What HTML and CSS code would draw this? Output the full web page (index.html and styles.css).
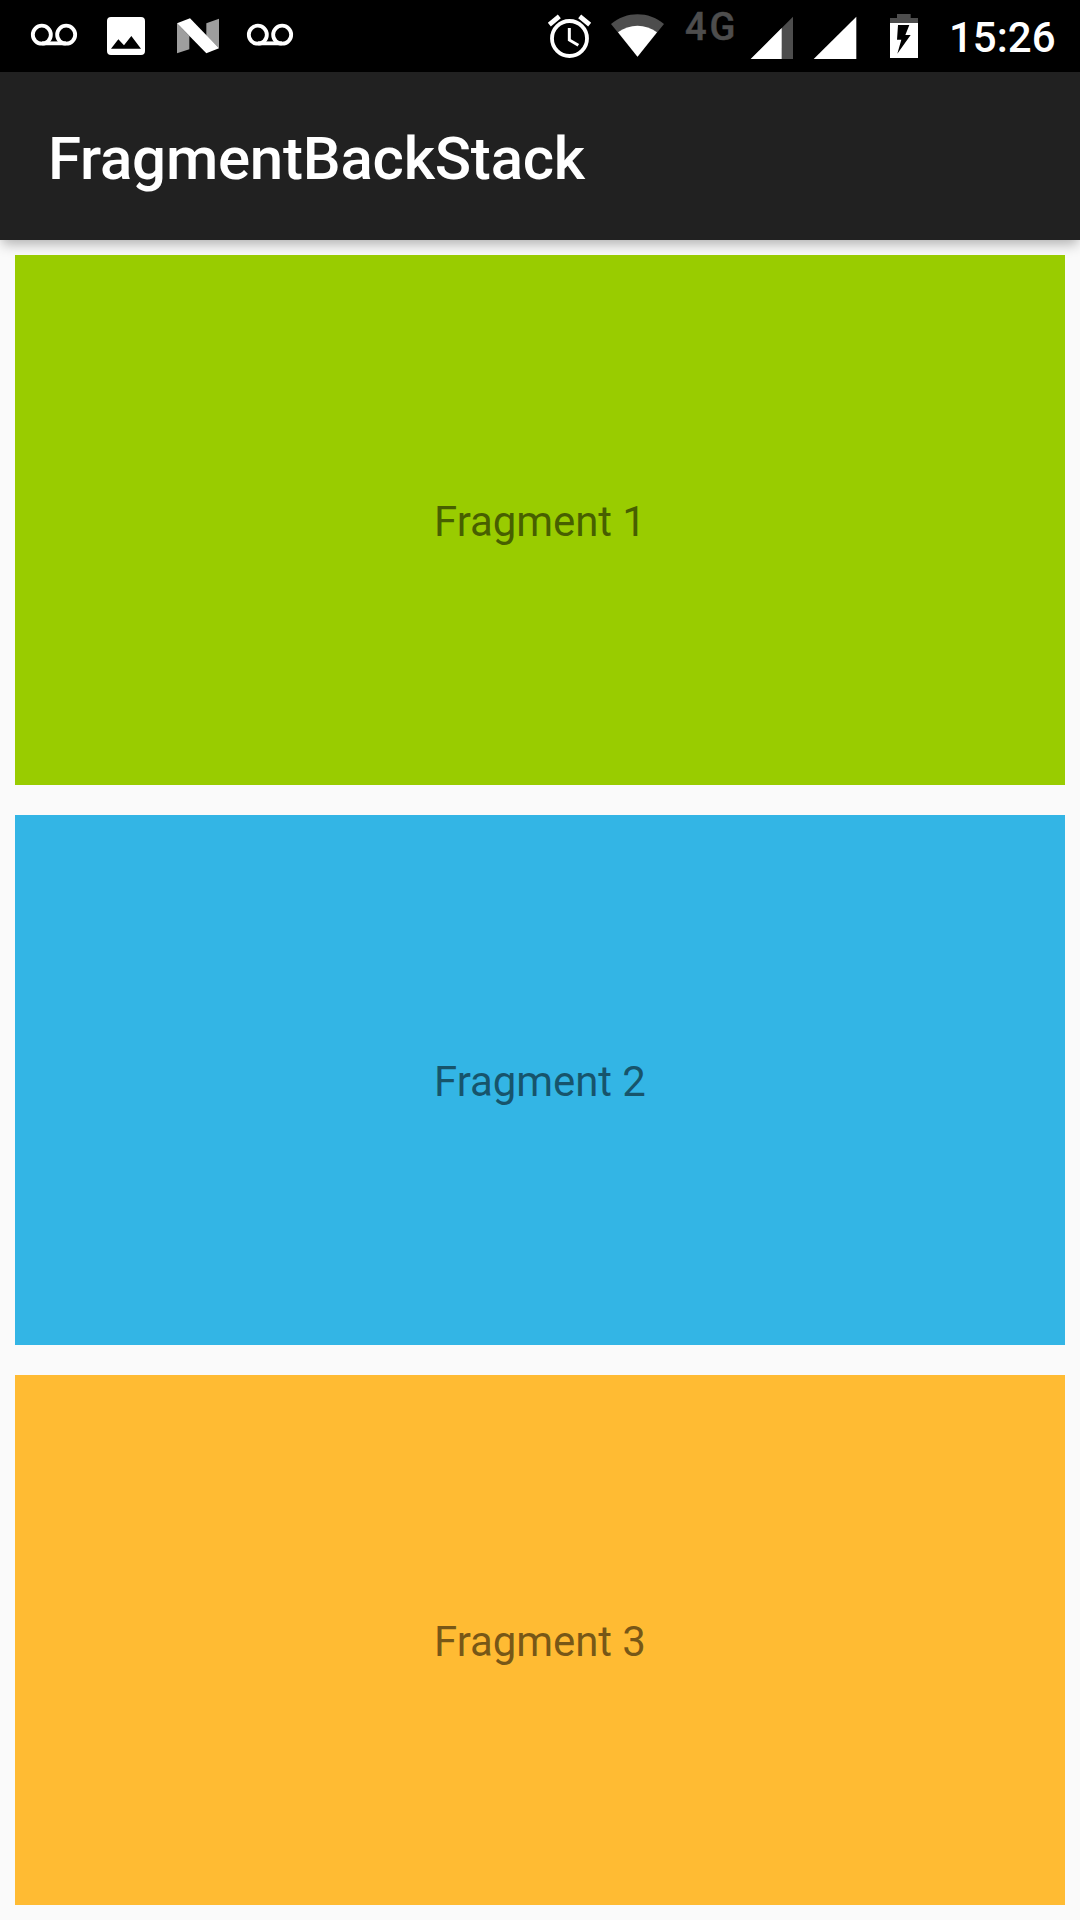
FILE: index.html
```html
<!DOCTYPE html>
<html lang="en">
<head>
<meta charset="utf-8">
<title>FragmentBackStack</title>
<link rel="stylesheet" href="styles.css">
</head>
<body>
<div class="screen">
  <header class="status-bar">
    <div class="notifications">
      <svg class="icon voicemail" viewBox="90 0 144 216"><g class="line"><circle cx="125.500" cy="104" r="27"/><circle cx="198.500" cy="104" r="27"/><path d="M125.500 130H198.500"/></g></svg>
      <svg class="icon photo" viewBox="318 0 120 216"><path fill-rule="evenodd" d="M333 51H423Q435 51 435 63V153Q435 165 423 165H333Q321 165 321 153V63Q321 51 333 51ZM333 146H423L394 108L372 136L355 118Z"/></svg>
      <svg class="icon nougat" viewBox="528 0 132 216"><path class="shade" d="M531 70L568 108V148L531 160ZM619 70L657 56V145L619 107Z"/><path d="M531 70L570 55L657 145L619 160Z"/></svg>
      <svg class="icon voicemail" viewBox="90 0 144 216"><g class="line"><circle cx="125.500" cy="104" r="27"/><circle cx="198.500" cy="104" r="27"/><path d="M125.500 130H198.500"/></g></svg>
    </div>
    <div class="system">
      <svg class="icon alarm" viewBox="51 0 135 216"><g class="line"><circle cx="118.500" cy="115.500" r="52.500"/><path class="bell" d="M58 74L88 49M149 49L179 74"/><path class="hand" d="M118 84V120L145 136"/></g></svg>
      <svg class="icon wifi" viewBox="240 0 165 216"><path class="dim" d="M243 72C289 33 356 33 402 72L322.500 170Z"/><path d="M264 97C298 71 347 71 381 97L322.500 170Z"/></svg>
      <span class="network">4G</span>
      <svg class="icon signal" viewBox="660 0 132 216"><path class="dim" d="M789 50V177H662Z"/><path d="M755 84V177H662Z"/></svg>
      <svg class="icon signal-full" viewBox="38 0 132 216"><path d="M168 50V177H40Z"/></svg>
      <svg class="icon battery" viewBox="267 0 90 216"><path class="dim" d="M270 54H291V42H332V54H354V70H270Z"/><path fill-rule="evenodd" d="M270 69H354V174H270ZM294 75H328L316 105H332L292 161L304 119H291Z"/></svg>
      <time class="clock">15:26</time>
    </div>
  </header>
  <div class="app-bar"><h1 class="title">FragmentBackStack</h1></div>
  <main class="fragments">
    <section class="fragment green">Fragment 1</section>
    <section class="fragment blue">Fragment 2</section>
    <section class="fragment orange">Fragment 3</section>
  </main>
</div>
</body>
</html>
```
FILE: styles.css
```css
* { box-sizing: border-box; }
body { margin: 0; font-family: Roboto, sans-serif; }
.screen { width: 1080px; height: 1920px; display: flex; flex-direction: column; background: #fafafa; overflow: hidden; }
.status-bar { height: 72px; flex: none; background: #000; color: #fff; display: flex; justify-content: space-between; }
.notifications, .system { display: flex; }
.notifications { padding-left: 30px; }
.system { padding-right: 24px; }
.icon { display: block; height: 72px; flex: none; fill: #fff; }
.line { fill: none; stroke: #fff; stroke-width: 11.500; }
.bell { stroke-width: 14; }
.hand { stroke-width: 9; }
.dim { fill: #4d4d4d; }
.shade { fill: #9e9e9e; }
.voicemail { width: 48px; }
.photo { width: 40px; margin-left: 28px; }
.nougat { width: 44px; margin: 0 26px 0 30px; }
.alarm { width: 45px; }
.wifi { width: 55px; margin-left: 18px; }
.network { width: 53px; margin: 4px 12px 0 20px; font-size: 38px; line-height: 46px; font-weight: 500; letter-spacing: 3px; color: #4d4d4d; -webkit-text-stroke: .5px #4d4d4d; }
.signal { width: 44px; }
.signal-full { width: 44px; margin-left: 18.700px; }
.battery { width: 30px; margin-left: 32.300px; }
.clock { width: 107px; margin-left: 30px; padding-top: 2px; font-size: 42px; line-height: 72px; font-weight: 500; white-space: nowrap; }
.app-bar { position: relative; height: 168px; flex: none; display: flex; align-items: center; padding: 6px 48px 0; background: #212121; box-shadow: 0 6px 12px -2px rgba(0, 0, 0, .3); }
.title { margin: 0; color: #fff; font-size: 60px; line-height: 70px; font-weight: 500; letter-spacing: -.22px; }
.fragments { flex: 1; display: flex; flex-direction: column; gap: 30px; padding: 15px; }
.fragment { position: relative; flex: 1; display: flex; align-items: center; justify-content: center; padding-top: 2px; font-size: 42px; line-height: 49px; letter-spacing: -.08px; color: rgba(0, 0, 0, .54); }
.green { background: #99cc00; }
.blue { background: #33b5e5; }
.orange { background: #ffbb33; }
```
